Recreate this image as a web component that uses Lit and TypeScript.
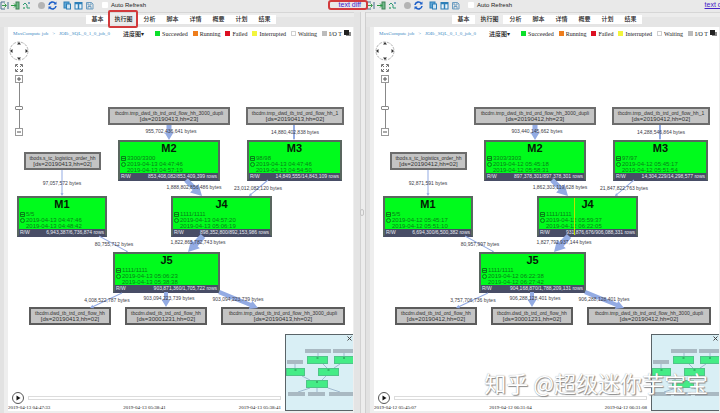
import { LitElement, html, svg, css } from "lit";
import { customElement, property } from "lit/decorators.js";
import { styleMap } from "lit/directives/style-map.js";

interface JobNode { x: number; y: number; w: number; title: string; tasks: string; start: string; end: string; rows: string; marker?: number; }
interface DataNode { x: number; y: number; w: number; name: string; part: string; out?: boolean; }
interface Flow { from: [number, number]; to: [number, number]; width: number; head: number; at: [number, number]; bytes: string; }
interface Run { jobs: JobNode[]; data: DataNode[]; flows: Flow[]; times: string[]; }

// Both runs share one plan; only dates and volumes differ.
const plan = (day: string, tasks: string[], spans: string[][], rows: string[], bytes: string[], times: string[], marker?: number): Run => ({
  times,
  jobs: [
    { x: 110, y: 100, w: 102, title: "M2" },
    { x: 239, y: 100, w: 95, title: "M3" },
    { x: 9, y: 156, w: 90, title: "M1" },
    { x: 163, y: 156, w: 101, title: "J4", marker },
    { x: 105, y: 212, w: 107, title: "J5" },
  ].map((j, i) => ({ ...j, tasks: tasks[i], start: spans[i][0], end: spans[i][1], rows: rows[i] })),
  data: [
    { x: 100, y: 67, w: 122, name: "tbcdm.tmp_dwd_tb_trd_ord_flow_hh_3000_dupli", part: `[ds=${day},hh=23]` },
    { x: 238, y: 67, w: 98, name: "tbcdm.tmp_dwd_tb_trd_ord_flow_hh_1", part: `[ds=${day},hh=02]` },
    { x: 16, y: 112, w: 77, name: "tbods.s_tc_logistics_order_hh", part: `[ds=${day},hh=02]` },
    { x: 21, y: 267, w: 82, name: "tbcdm.dwd_tb_trd_ord_flow_hh", part: `[ds=${day},hh=02]`, out: true },
    { x: 117, y: 267, w: 82, name: "tbcdm.dwd_tb_trd_ord_flow_hh", part: "[ds=30001231,hh=02]", out: true },
    { x: 213, y: 267, w: 124, name: "tbcdm.tmp_dwd_tb_trd_ord_flow_hh_3000_dupli", part: `[ds=${day},hh=02]`, out: true },
  ],
  flows: ([
    { from: [161, 85], to: [161, 100], width: 5, head: 9, at: [163, 91] },
    { from: [286, 85], to: [286, 100], width: 2, head: 2, at: [287, 92] },
    { from: [54, 130], to: [54, 156], width: 1, head: 3, at: [54, 143] },
    { from: [178, 140], to: [194, 156], width: 5, head: 12, at: [186, 147] },
    { from: [260, 140], to: [241, 156], width: 1, head: 3, at: [250, 148] },
    { from: [91, 196], to: [120, 212], width: 1, head: 2, at: [106, 204] },
    { from: [195, 196], to: [180, 212], width: 6, head: 12, at: [190, 202] },
    { from: [114, 253], to: [82, 268], width: 1, head: 4, at: [99, 260] },
    { from: [158, 252], to: [158, 267], width: 4, head: 9, at: [161, 258] },
    { from: [211, 252], to: [250, 268], width: 4, head: 9, at: [230, 259] },
  ] as Omit<Flow, "bytes">[]).map((f, i) => ({ ...f, bytes: bytes[i] })),
});

const RUNS: Run[] = [
  plan("20190413",
    ["3300/3300", "98/98", "5/5", "1111/1111", "1111/1111"],
    [["2019-04-13 04:47:46", "2019-04-13 04:57:19"], ["2019-04-13 04:47:46", "2019-04-13 04:54:50"], ["2019-04-13 04:47:46", "2019-04-13 04:48:42"], ["2019-04-13 04:57:20", "2019-04-13 05:06:19"], ["2019-04-13 05:06:23", "2019-04-13 05:38:38"]],
    ["853,408,082/853,409,399 rows", "14,849,555/14,843,109 rows", "6,943,387/6,736,874 rows", "898,352,800/892,153,986 rows", "903,871,360/1,705,722 rows"],
    ["955,702,436,641 bytes", "14,880,402,838 bytes", "97,057,572 bytes", "1,888,802,856,486 bytes", "23,012,082,120 bytes", "80,755,712 bytes", "1,822,865,782,743 bytes", "4,008,522,787 bytes", "903,094,223,739 bytes", "903,094,223,739 bytes"],
    ["2019-04-13 04:47:33", "2019-04-13 05:38:41", "2019-04-13 05:38:41"]),
  plan("20190412",
    ["3303/3303", "97/97", "5/5", "1111/1111", "1111/1111"],
    [["2019-04-12 05:45:18", "2019-04-12 05:58:31"], ["2019-04-12 05:45:17", "2019-04-12 05:51:54"], ["2019-04-12 05:45:17", "2019-04-12 05:51:10"], ["2019-04-12 05:59:37", "2019-04-12 06:22:05"], ["2019-04-12 06:22:38", "2019-04-12 06:27:42"]],
    ["897,378,301/897,378,301 rows", "14,304,229/14,298,577 rows", "6,694,300/6,500,382 rows", "931,876,676/906,088,331 rows", "904,168,870/1,788,209,131 rows"],
    ["903,440,145,662 bytes", "14,288,546,864 bytes", "92,871,591 bytes", "1,862,303,119,628 bytes", "21,847,822,763 bytes", "80,957,997 bytes", "1,827,792,937,144 bytes", "3,757,706,736 bytes", "906,288,128,401 bytes", "906,288,128,401 bytes"],
    ["2019-04-12 05:45:07", "2019-04-12 06:31:04", "2019-04-12 06:31:08"], 35),
];

const arrow = (f: Flow) => {
  const dx = f.to[0] - f.from[0], dy = f.to[1] - f.from[1];
  const len = Math.hypot(dx, dy), ux = dx / len, uy = dy / len;
  const hl = Math.min(len / 2, f.head * 0.9);
  const nx = f.to[0] - ux * hl, ny = f.to[1] - uy * hl;
  const p = (x: number, y: number, r: number) => `${(x - uy * r).toFixed(1)},${(y + ux * r).toFixed(1)}`;
  const w = f.width / 2, h = f.head / 2;
  return svg`<polygon points="${[p(f.from[0], f.from[1], w), p(nx, ny, w), p(nx, ny, h), p(f.to[0], f.to[1], 0), p(nx, ny, -h), p(nx, ny, -w), p(f.from[0], f.from[1], -w)].join(" ")}"/>`;
};

const TOOLS = [
  { name: "Open", art: svg`<path d="M5 1H1v7h4M8 1v7" stroke="#4a6f8f"/><path d="M2 4.500h4M4.500 2.500l2 2-2 2" stroke="#3d9a4f"/>` },
  { name: "Import", art: svg`<rect x="5" y="1" width="3" height="7" fill="#74b98a" stroke="#3c8355"/><path d="M0 4.500h5M3 2.500l2 2-2 2" stroke="#2a9a45"/>` },
  { name: "Connect", art: svg`<path d="M1 4l2-2 2 2v3h3" stroke="#2f9a72"/><circle cx="2" cy="7" r="1" fill="#4fae7a"/><circle cx="7" cy="2" r="1" fill="#5a8fb0"/>` },
  { name: "Stop", wide: true, art: svg`<circle cx="4.500" cy="4.500" r="3.500" fill="#b4b4b4"/>` },
  { name: "Refresh", art: svg`<path d="M1 4a3.500 3.500 0 0 1 6.300-1.500M8 5a3.500 3.500 0 0 1-6.300 1.500" stroke="#1f60c8" stroke-width="1.600"/><path d="M8.500 .5v3h-3zM.5 8.500v-3h3z" fill="#1f60c8"/>` },
  { name: "Copy", wide: true, art: svg`<rect x="1" y="1" width="5" height="6" fill="#5fa7d6" stroke="#2d7fb8"/><rect x="3.500" y="3" width="4" height="5" fill="#cfe5f3" stroke="#2d7fb8"/>` },
  { name: "Layout", art: svg`<rect x="1" y="1.500" width="7" height="6.500" fill="#e8f3fa" stroke="#2d7fb8"/><path d="M1 2.500h7M4.500 3v5" stroke="#2d7fb8" stroke-width="1.500"/>` },
  { name: "Save", art: svg`<path d="M1.500 1.500h5l1.500 1.500v5h-6.500z" stroke="#6d9dc0"/><path d="M3 1.500v2.500h3v-2.500M3 8v-2.500h3v2.500" stroke="#6d9dc0"/>` },
];
const TABS = ["基本", "执行图", "分析", "脚本", "详情", "概要", "计划", "结果"];
const STATES = [["Succeeded", "ok"], ["Running", "run"], ["Failed", "fail"], ["Interrupted", "int"], ["Waiting", "wait"], ["I/O T", "io"]];

@customElement("job-pane")
class JobPane extends LitElement {
  @property({ attribute: false }) run!: Run;
  @property({ type: Boolean }) marked = false;

  static styles = css`
    :host { display: flex; flex-direction: column; min-width: 0; font: 6px/8px "Liberation Sans", "Noto Sans CJK SC", sans-serif; color: #222; }
    * { box-sizing: border-box; }
    button { border: 0; background: none; padding: 0; margin: 0; font: inherit; color: inherit; display: block; }
    svg { display: block; fill: none; }
    .toolbar { display: flex; align-items: center; gap: 2px; height: 12px; padding-bottom: 2px; }
    .tool { width: 9px; height: 9px; }
    .tool.wide { margin-left: 4px; }
    .auto { display: flex; align-items: center; gap: 3px; margin-left: 6px; white-space: nowrap; }
    .auto input { appearance: none; width: 6px; height: 6px; margin: 0; background: #fff; border-radius: 1px; }
    .diff { position: relative; z-index: 2; margin-left: auto; margin-right: -7px; font-size: 7px; white-space: nowrap; }
    .diff a { color: #4420c8; }
    .ring { position: absolute; border: 2px solid #d23a3c; border-radius: 3px; pointer-events: none; }
    .diff .ring { inset: -1px -7px -1px -11px; }
    .tabs { display: flex; justify-content: center; height: 15px; padding: 2px 0 3px 8px; border-top: 1px solid #d6d6d6; background: linear-gradient(#ececec 4px, #e5e5e5 4px); }
    .strip { display: flex; gap: 1px; background: #fff; }
    .tabs button { position: relative; padding: 0 5px; font-weight: 500; line-height: 9px; white-space: nowrap; }
    .tabs .on { background: #ececec; }
    .tabs .ring { inset: -5px -1px -4px; border-radius: 2px; }
    .frame { flex: 1; display: flex; padding: 0 1px 2px 4px; border-left: 4px solid #e2e2e2; background: #eeeeee; }
    .panel { flex: 1; min-width: 0; display: flex; flex-direction: column; background: #fff; overflow: hidden; }
    .head { display: flex; align-items: center; height: 13px; padding: 0 2px 0 5px; font-family: "Liberation Serif", "Noto Sans CJK SC", serif; white-space: nowrap; }
    .crumb { display: flex; gap: 4px; color: #3f8cc4; width: 110px; font-size: 5px; }
    .crumb a { color: inherit; text-decoration: none; }
    .chart { font-weight: 500; }
    .legend { display: flex; gap: 5px; margin: 0 2px 0 auto; padding: 0; list-style: none; }
    .legend li { display: flex; align-items: center; gap: 2px; }
    .sw { width: 5px; height: 5px; }
    .ok { background: #0be02a; } .run { background: #ee7d1c; } .fail { background: #dc0f22; }
    .int { background: #f2f53c; } .wait { background: #fff; border: 1px solid #d0d0d0; } .io { background: #bcbcbc; }
    .stage { position: relative; flex: 1; min-height: 348px; }
    .nav { position: absolute; left: 1px; top: 1px; width: 20px; display: flex; flex-direction: column; align-items: center; }
    .fit { margin: 3px 0; }
    .zoom { appearance: none; writing-mode: vertical-lr; width: 8px; height: 45px; margin: 0; background: linear-gradient(#888, #888) center / 1px 100% no-repeat; }
    .zoom::-webkit-slider-thumb { appearance: none; width: 8px; height: 4px; background: #fff; border: 1px solid #888; border-radius: 1px; }
    .flows { position: absolute; left: 0; top: 0; overflow: visible; fill: #93abe3; }
    .job, .data, .bytes { position: absolute; white-space: nowrap; }
    .job { border: 2px solid #59665f; border-bottom-color: #484d66; background: #00fb1c; line-height: 6px; color: #087f18; }
    .job h2 { margin: 0; font-size: 11px; line-height: 13px; text-align: center; color: #041c06; }
    .job p { margin: 0; display: flex; align-items: center; gap: 1px; padding-left: 1px; }
    .job .end { padding-left: 7px; }
    .job .rows { display: flex; justify-content: space-between; padding: 0 1px; background: #484d66; color: #e6e8f0; font-size: 5px; }
    .marker { position: absolute; top: 0; bottom: 0; width: 1px; background: #b9e300; }
    .data { display: flex; flex-direction: column; align-items: center; border: 2px solid #6c6c6c; background: #c4c4c4; color: #333; line-height: 6px; padding: 1px 0; }
    .name { font-size: 5px; }
    .data.out { border-color: #5c5c5c; }
    .bytes { font-size: 5px; line-height: 6px; color: #3c3c48; transform: translate(-50%, -50%); }
    .time { position: absolute; left: 0; right: 72px; bottom: 0; }
    .play-row { display: flex; align-items: center; gap: 4px; padding-left: 4px; }
    .seek { appearance: none; flex: 1; min-width: 0; height: 4px; margin: 0; background: #fff; border: 1px solid #dcdcdc; }
    .seek::-webkit-slider-thumb { appearance: none; width: 1px; height: 2px; }
    .stamps { display: flex; justify-content: space-between; font: 5px/7px "Liberation Serif", serif; color: #222; white-space: nowrap; }
    .mini { position: absolute; right: 0; bottom: 0; width: 68px; height: 77px; border: 1px solid #5a6468; border-right: 0; background: #d9eff5; }
    .mini button { position: absolute; right: 1px; top: 1px; }
  `;

  private job(n: JobNode) {
    return html`<section class="job" style=${styleMap({ left: `${n.x}px`, top: `${n.y}px`, width: `${n.w}px` })}>
      <h2>${n.title}</h2>
      <p><svg width="5" height="5" stroke="#087f18"><path d="M.5 .5h4v4h-4zM.5 2.500h4"/></svg>${n.tasks}</p>
      <p><svg width="5" height="5" stroke="#087f18"><circle cx="2.500" cy="2.500" r="2"/></svg>${n.start}</p>
      <p class="end">${n.end}</p>
      <div class="rows"><span>R/W</span><span>${n.rows}</span></div>
      ${n.marker ? html`<i class="marker" style=${styleMap({ left: `${n.marker}px` })}></i>` : ""}
    </section>`;
  }

  private mini() {
    const grey = [[19, 14, 26, 4], [47, 14, 21, 4], [1, 25, 16, 4], [2, 57, 17, 4], [22, 57, 17, 4], [43, 57, 25, 4]];
    const green = [[21, 21, 21, 8], [48, 21, 20, 8], [0, 33, 19, 8], [32, 33, 21, 8], [20, 45, 22, 8]];
    return svg`<svg width="67" height="75">
      <path d="M32 18v3M58 18v3M9 29v4M37 29l4 4M54 29l-6 4M16 41l8 4M40 41l-4 4M24 53l-12 4M31 53v4M42 53l12 4" stroke="#9fb9cf"/>
      ${grey.map(b => svg`<rect x=${b[0]} y=${b[1]} width=${b[2]} height=${b[3]} fill="#a9b9c2"/>`)}
      ${green.map(b => svg`<rect x=${b[0] + 0.5} y=${b[1] + 0.5} width=${b[2] - 1} height=${b[3] - 1} fill="#44ec86" stroke="#50c488"/><path d="M${b[0] + b[2] / 2 - 1} ${b[1] + 2}h2" stroke="#23804a"/>`)}
    </svg>`;
  }

  render() {
    const r = this.run;
    return html`
      <div class="toolbar">
        ${TOOLS.map(t => html`<button class="tool ${t.wide ? "wide" : ""}" aria-label=${t.name}><svg width="9" height="9">${t.art}</svg></button>`)}
        <label class="auto"><input type="checkbox">Auto Refresh</label>
        <span class="diff"><a href="#diff">text diff</a>${this.marked ? html`<i class="ring"></i>` : ""}</span>
      </div>
      <nav class="tabs"><div class="strip">${TABS.map((t, i) => html`<button class=${i === 1 ? "on" : ""}>${t}${i === 1 && this.marked ? html`<i class="ring"></i>` : ""}</button>`)}</div></nav>
      <div class="frame"><div class="panel">
        <div class="head">
          <span class="crumb"><a href="#job">MaxCompute job</a><span>&gt;</span><a href="#sql">JOB:_SQL_0_1_0_job_0</a></span>
          <button class="chart">进度图▾</button>
          <ul class="legend">${STATES.map(([t, c]) => html`<li><i class="sw ${c}"></i>${t}</li>`)}</ul>
          <button aria-label="Windows"><svg width="7" height="7"><rect x="2" y="2" width="5" height="4" fill="#888"/><rect width="5" height="5" fill="#222"/></svg></button>
        </div>
        <div class="stage">
          <div class="nav">
            <svg width="20" height="20"><circle cx="10" cy="10" r="9" stroke="#b5b5b5" stroke-dasharray="3 1"/><path d="M10 1l2 2.500h-4zM10 19l2-2.500h-4zM1 10l2.500-2v4zM19 10l-2.500-2v4z" fill="#333"/></svg>
            <button class="fit" aria-label="Fit"><svg width="8" height="8" stroke="#777"><path d="M3 .5H.5V3M5 .5h2.500V3M3 7.500H.5V5M5 7.500h2.500V5M1 1l2 2M7 1l-2 2M1 7l2-2M7 7l-2-2"/></svg></button>
            <button aria-label="Zoom in"><svg width="8" height="8"><rect x=".5" y=".5" width="7" height="7" stroke="#999"/><path d="M4 2v4M2 4h4" stroke="#555"/></svg></button>
            <input class="zoom" type="range" aria-label="Zoom" value="56">
            <button aria-label="Zoom out"><svg width="8" height="8"><rect x=".5" y=".5" width="7" height="7" stroke="#999"/><path d="M2 4h4" stroke="#555"/></svg></button>
          </div>
          ${r.data.map(d => html`<div class="data ${d.out ? "out" : ""}" style=${styleMap({ left: `${d.x}px`, top: `${d.y}px`, width: `${d.w}px` })}><span class="name">${d.name}</span><span>${d.part}</span></div>`)}
          ${r.jobs.map(n => this.job(n))}
          <svg class="flows" width="1" height="1">${r.flows.map(arrow)}</svg>
          ${r.flows.map(f => html`<span class="bytes" style=${styleMap({ left: `${f.at[0]}px`, top: `${f.at[1]}px` })}>${f.bytes}</span>`)}
          <div class="time">
            <div class="play-row">
              <button aria-label="Play"><svg width="12" height="12"><circle cx="6" cy="6" r="5.500" stroke="#555"/><path d="M4.500 3.500v5l4-2.500z" fill="#111"/></svg></button>
              <input class="seek" type="range" aria-label="Timeline" value="0">
            </div>
            <div class="stamps">${r.times.map(t => html`<span>${t}</span>`)}</div>
          </div>
          <div class="mini">${this.mini()}<button aria-label="Close map"><svg width="5" height="5" stroke="#444"><path d="M.5 .5l4 4M4.500 .5l-4 4"/></svg></button></div>
        </div>
      </div></div>`;
  }
}

@customElement("app-root")
class AppRoot extends LitElement {
  static styles = css`
    :host { position: relative; display: grid; grid-template-columns: minmax(0, 1fr) 12px minmax(0, 1fr); min-height: 100vh; background: #e9e9e9; overflow: hidden; }
    .split { display: flex; align-items: center; justify-content: flex-end; margin-top: 12px; border-left: 6px solid #e4e4e4; border-right: 1px solid #cfcfcf; background: #ededed; box-shadow: inset 1px 0 #d2d2d2; }
    .grip { width: 3px; height: 5px; margin-right: 1px; border: 1px solid #c4c4c4; border-radius: 2px; }
    .mark { position: absolute; right: 12px; bottom: 15px; font: 22px/32px "Noto Sans CJK SC", sans-serif; color: #fff; white-space: nowrap; pointer-events: none; text-shadow: 1px 1px 1px #888, 0 0 1px #999; }
  `;
  render() {
    return html`<job-pane .run=${RUNS[0]} marked></job-pane>
      <div class="split"><i class="grip"></i></div>
      <job-pane .run=${RUNS[1]}></job-pane>
      <div class="mark">知乎 @超级迷你芋宝宝</div>`;
  }
}
